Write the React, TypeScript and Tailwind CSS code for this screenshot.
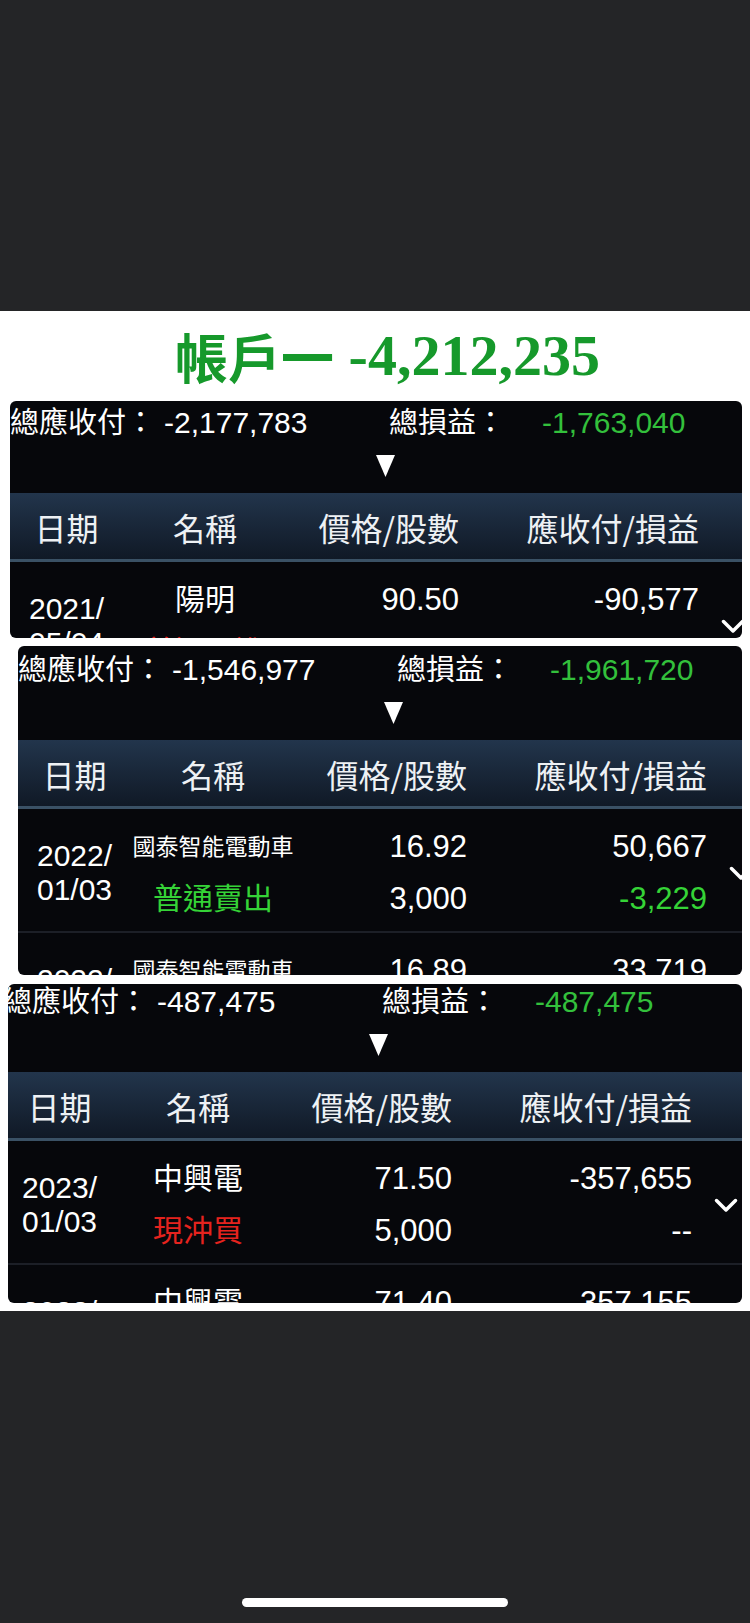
type Row = {
  date: [string, string];
  name: string;
  small?: boolean;
  side: string;
  sideColor: string;
  price: string;
  qty: string;
  amount: string;
  pl: string;
  plColor: string;
};

type Card = {
  total: string;
  pl: string;
  box: string;
  shift: string;
  rows: Row[];
};

const cards: Card[] = [
  {
    total: "-2,177,783",
    pl: "-1,763,040",
    box: "ml-[10px] h-[237px]",
    shift: "mt-0 ml-0",
    rows: [
      {
        date: ["2021/", "05/04"],
        name: "陽明",
        side: "普通買進",
        sideColor: "text-[#e5231e]",
        price: "90.50",
        qty: "1,000",
        amount: "-90,577",
        pl: "--",
        plColor: "text-white",
      },
    ],
  },
  {
    total: "-1,546,977",
    pl: "-1,961,720",
    box: "ml-[18px] h-[329px]",
    shift: "mt-[2px] ml-0",
    rows: [
      {
        date: ["2022/", "01/03"],
        name: "國泰智能電動車",
        small: true,
        side: "普通賣出",
        sideColor: "text-[#35d337]",
        price: "16.92",
        qty: "3,000",
        amount: "50,667",
        pl: "-3,229",
        plColor: "text-[#35d337]",
      },
      {
        date: ["2022/", "01/03"],
        name: "國泰智能電動車",
        small: true,
        side: "普通賣出",
        sideColor: "text-[#35d337]",
        price: "16.89",
        qty: "2,000",
        amount: "33,719",
        pl: "-2,180",
        plColor: "text-[#35d337]",
      },
    ],
  },
  {
    total: "-487,475",
    pl: "-487,475",
    box: "ml-[8px] h-[319px]",
    shift: "mt-[-4px] ml-[-5px]",
    rows: [
      {
        date: ["2023/", "01/03"],
        name: "中興電",
        side: "現沖買",
        sideColor: "text-[#e5231e]",
        price: "71.50",
        qty: "5,000",
        amount: "-357,655",
        pl: "--",
        plColor: "text-white",
      },
      {
        date: ["2023/", "01/03"],
        name: "中興電",
        side: "現沖賣",
        sideColor: "text-[#35d337]",
        price: "71.40",
        qty: "5,000",
        amount: "-357,155",
        pl: "--",
        plColor: "text-white",
      },
    ],
  },
];

const cols = "grid grid-cols-[113px_164px_172px_240px_46px]";

function Chevron() {
  return (
    <svg width="24" height="15" viewBox="0 0 24 15" fill="none">
      <polyline points="2.5,2.5 12,12 21.5,2.5" stroke="white" strokeWidth="3.5" strokeLinecap="round" strokeLinejoin="round" />
    </svg>
  );
}

function TradeRow({ r }: { r: Row }) {
  return (
    <div className={`${cols} h-[124px] items-center border-b-2 border-[#1c1f27] pt-[6px] text-white`}>
      <div className="flex flex-col items-center text-[30px] leading-[34px]">
        <span>{r.date[0]}</span>
        <span>{r.date[1]}</span>
      </div>
      <div className="flex flex-col items-center">
        <span className={`h-[52px] whitespace-nowrap ${r.small ? "text-[23px]" : "text-[30px]"} leading-[52px]`}>{r.name}</span>
        <span className={`h-[52px] text-[30px] leading-[52px] ${r.sideColor}`}>{r.side}</span>
      </div>
      <div className="flex flex-col items-end text-[31px] leading-[52px]">
        <span>{r.price}</span>
        <span>{r.qty}</span>
      </div>
      <div className="flex flex-col items-end text-[31px] leading-[52px]">
        <span>{r.amount}</span>
        <span className={r.plColor}>{r.pl}</span>
      </div>
      <div className="flex justify-end">
        <Chevron />
      </div>
    </div>
  );
}

function AccountCard({ c }: { c: Card }) {
  return (
    <div className={`${c.box} mr-[8px] overflow-hidden rounded-[6px] bg-[#06070b]`}>
      <div className={`${c.shift} w-[760px]`}>
        <div className="grid h-[43px] grid-cols-[154px_225px_153px_1fr] items-center text-[30px] leading-[36px] text-white">
          <span className="whitespace-nowrap text-[29px]">總應收付：</span>
          <span>{c.total}</span>
          <span className="whitespace-nowrap text-[29px]">總損益：</span>
          <span className="text-[#33c03c]">{c.pl}</span>
        </div>
        <div className="mb-[5px] flex h-[44px] w-[750px] items-center justify-center">
          <svg width="19" height="22" viewBox="0 0 19 22">
            <polygon points="0,0 19,0 9.5,22" fill="white" />
          </svg>
        </div>
        <div className={`${cols} h-[69px] items-center border-b-[3px] border-[#3a5165] bg-gradient-to-b from-[#22354c] to-[#101926] pt-[2px] font-['Noto_Sans_CJK_TC',sans-serif] text-[32px] leading-none text-[#eef1f4]`}>
          <span className="text-center">日期</span>
          <span className="text-center">名稱</span>
          <span className="text-right">價格/股數</span>
          <span className="text-right">應收付/損益</span>
          <span />
        </div>
        {c.rows.map((r, i) => (
          <TradeRow key={i} r={r} />
        ))}
      </div>
    </div>
  );
}

export default function App() {
  return (
    <div className="flex min-h-[1623px] w-[750px] flex-col bg-[#242527] font-['Liberation_Sans','Noto_Sans_CJK_TC',sans-serif]">
      <div className="h-[311px]" />
      <div className="flex flex-col bg-white pb-[8px]">
        <div className="flex h-[90px] items-center justify-center pl-[25px] text-[#16992b]">
          <span className="font-['Noto_Sans_CJK_TC',sans-serif] text-[53px] font-bold leading-none">帳戶一</span>
          <span className="whitespace-pre font-['Liberation_Serif',serif] text-[58px] font-bold leading-none"> -4,212,235</span>
        </div>
        <div className="flex flex-col gap-[8px]">
          <AccountCard c={cards[0]} />
          <AccountCard c={cards[1]} />
          <div className="mt-[1px]">
            <AccountCard c={cards[2]} />
          </div>
        </div>
      </div>
      <div className="flex flex-1 justify-center pt-[287px]">
        <div className="h-[9px] w-[266px] rounded-full bg-white" />
      </div>
    </div>
  );
}
